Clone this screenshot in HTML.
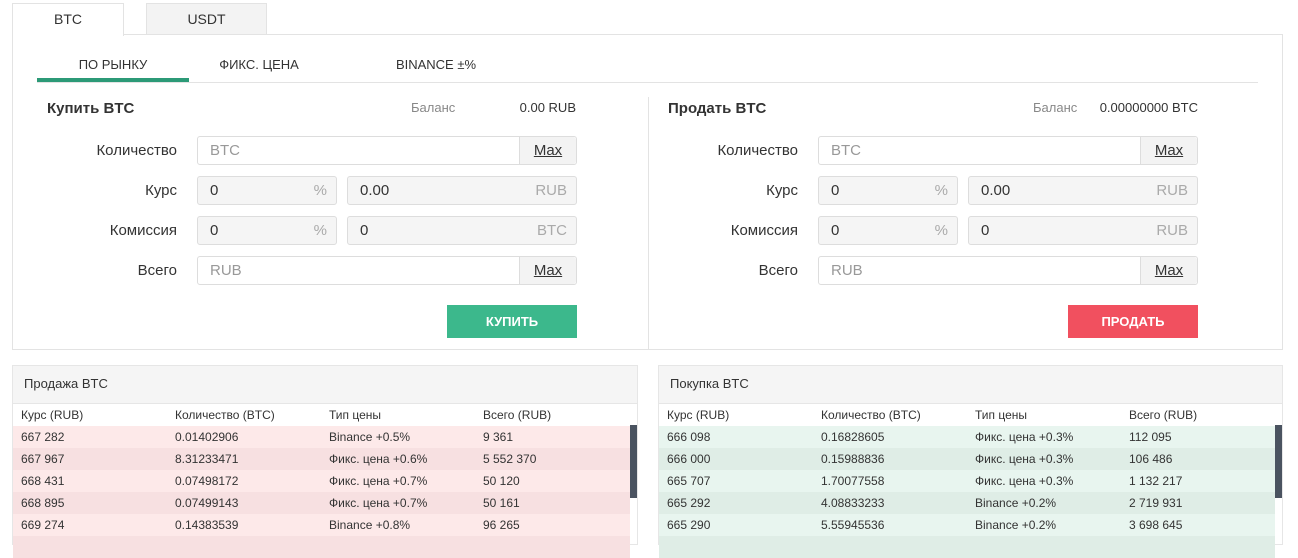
<!DOCTYPE html>
<html><head><meta charset="utf-8"><style>
*{box-sizing:border-box;margin:0;padding:0}
body{width:1298px;height:538px;overflow:hidden;background:#fff;font-family:"Liberation Sans",sans-serif;color:#333;position:relative}
.a{position:absolute}
.tab{position:absolute;top:3px;height:32px;border:1px solid #e3e3e3;border-bottom:none;font-size:14px;text-align:center;line-height:30px}
.lbl{position:absolute;font-size:15px;color:#333;text-align:right;width:150px}
.inp{position:absolute;height:29px;border:1px solid #ddd;border-radius:3px;font-size:15px;color:#999;line-height:27px;padding-left:12px}
.dis{background:#f5f5f5}
.max{position:absolute;right:0;top:0;height:27px;width:57px;border-left:1px solid #ddd;background:#f3f3f3;color:#333;text-decoration:underline;text-align:center;border-radius:0 3px 3px 0}
.suf{position:absolute;right:9px;top:0;color:#aaa}
.btn{position:absolute;width:130px;height:33px;color:#fff;font-size:13px;font-weight:bold;text-align:center;line-height:33px}
.panel{position:absolute;top:365px;height:180px;border:1px solid #e6e6e6}
.ph{height:38px;background:#f5f5f5;font-size:13px;line-height:36px;padding-left:11px;border-bottom:1px solid #e6e6e6}
.row{height:22px;font-size:12px;line-height:22px;position:relative}
.row span{position:absolute;top:0}
</style></head><body>
<div class="tab" style="left:12px;width:112px;background:#fff;z-index:2;height:33px">BTC</div>
<div class="tab" style="left:146px;width:121px;background:#f3f3f3">USDT</div>
<div class="a" style="left:12px;top:34px;width:1271px;height:316px;border:1px solid #e3e3e3"></div>
<div class="a" style="left:37px;top:82px;width:1221px;height:1px;background:#e3e3e3"></div>
<div class="a" style="left:37px;top:78px;width:152px;height:4px;background:#2c9a77"></div>
<div class="a" style="left:37px;top:57px;width:152px;text-align:center;font-size:13px">ПО РЫНКУ</div>
<div class="a" style="left:204px;top:57px;width:110px;text-align:center;font-size:13px">ФИКС. ЦЕНА</div>
<div class="a" style="left:381px;top:57px;width:110px;text-align:center;font-size:13px">BINANCE ±%</div>
<div class="a" style="left:648px;top:97px;width:1px;height:253px;background:#e3e3e3"></div>

<div class="a" style="left:47px;top:100px;font-size:15px;font-weight:bold">Купить BTC</div>
<div class="a" style="left:411px;top:100px;font-size:13px;color:#888">Баланс</div>
<div class="a" style="left:476px;top:100px;width:100px;text-align:right;font-size:13px">0.00 RUB</div>
<div class="lbl" style="left:27px;top:142px">Количество</div>
<div class="lbl" style="left:27px;top:182px">Курс</div>
<div class="lbl" style="left:27px;top:222px">Комиссия</div>
<div class="lbl" style="left:27px;top:262px">Всего</div>
<div class="inp" style="left:197px;top:136px;width:380px">BTC<div class="max">Max</div></div>
<div class="inp dis" style="left:197px;top:176px;width:140px;color:#333">0<span class="suf">%</span></div>
<div class="inp dis" style="left:347px;top:176px;width:230px;color:#333">0.00<span class="suf">RUB</span></div>
<div class="inp dis" style="left:197px;top:216px;width:140px;color:#333">0<span class="suf">%</span></div>
<div class="inp dis" style="left:347px;top:216px;width:230px;color:#333">0<span class="suf">BTC</span></div>
<div class="inp" style="left:197px;top:256px;width:380px">RUB<div class="max">Max</div></div>
<div class="btn" style="left:447px;top:305px;background:#3cb88c">КУПИТЬ</div>

<div class="a" style="left:668px;top:100px;font-size:15px;font-weight:bold">Продать BTC</div>
<div class="a" style="left:1033px;top:100px;font-size:13px;color:#888">Баланс</div>
<div class="a" style="left:1078px;top:100px;width:120px;text-align:right;font-size:13px">0.00000000 BTC</div>
<div class="lbl" style="left:648px;top:142px">Количество</div>
<div class="lbl" style="left:648px;top:182px">Курс</div>
<div class="lbl" style="left:648px;top:222px">Комиссия</div>
<div class="lbl" style="left:648px;top:262px">Всего</div>
<div class="inp" style="left:818px;top:136px;width:380px">BTC<div class="max">Max</div></div>
<div class="inp dis" style="left:818px;top:176px;width:140px;color:#333">0<span class="suf">%</span></div>
<div class="inp dis" style="left:968px;top:176px;width:230px;color:#333">0.00<span class="suf">RUB</span></div>
<div class="inp dis" style="left:818px;top:216px;width:140px;color:#333">0<span class="suf">%</span></div>
<div class="inp dis" style="left:968px;top:216px;width:230px;color:#333">0<span class="suf">RUB</span></div>
<div class="inp" style="left:818px;top:256px;width:380px">RUB<div class="max">Max</div></div>
<div class="btn" style="left:1068px;top:305px;background:#f1505f">ПРОДАТЬ</div>

<div class="panel" style="left:12px;width:626px">
<div class="ph">Продажа BTC</div>
<div class="row" style="background:#fff"><span style="left:8px">Курс (RUB)</span><span style="left:162px">Количество (BTC)</span><span style="left:316px">Тип цены</span><span style="left:470px">Всего (RUB)</span></div>
<div class="row" style="background:#fde9e9;width:617px"><span style="left:8px">667 282</span><span style="left:162px">0.01402906</span><span style="left:316px">Binance +0.5%</span><span style="left:470px">9 361</span></div>
<div class="row" style="background:#f7e0e1;width:617px"><span style="left:8px">667 967</span><span style="left:162px">8.31233471</span><span style="left:316px">Фикс. цена +0.6%</span><span style="left:470px">5 552 370</span></div>
<div class="row" style="background:#fde9e9;width:617px"><span style="left:8px">668 431</span><span style="left:162px">0.07498172</span><span style="left:316px">Фикс. цена +0.7%</span><span style="left:470px">50 120</span></div>
<div class="row" style="background:#f7e0e1;width:617px"><span style="left:8px">668 895</span><span style="left:162px">0.07499143</span><span style="left:316px">Фикс. цена +0.7%</span><span style="left:470px">50 161</span></div>
<div class="row" style="background:#fde9e9;width:617px"><span style="left:8px">669 274</span><span style="left:162px">0.14383539</span><span style="left:316px">Binance +0.8%</span><span style="left:470px">96 265</span></div>
<div class="row" style="background:#f7e0e1;width:617px"></div>
<div class="a" style="left:617px;top:59px;width:7px;height:73px;background:#4a5360"></div>
</div>

<div class="panel" style="left:658px;width:625px">
<div class="ph">Покупка BTC</div>
<div class="row" style="background:#fff"><span style="left:8px">Курс (RUB)</span><span style="left:162px">Количество (BTC)</span><span style="left:316px">Тип цены</span><span style="left:470px">Всего (RUB)</span></div>
<div class="row" style="background:#e8f5ef;width:616px"><span style="left:8px">666 098</span><span style="left:162px">0.16828605</span><span style="left:316px">Фикс. цена +0.3%</span><span style="left:470px">112 095</span></div>
<div class="row" style="background:#dfede6;width:616px"><span style="left:8px">666 000</span><span style="left:162px">0.15988836</span><span style="left:316px">Фикс. цена +0.3%</span><span style="left:470px">106 486</span></div>
<div class="row" style="background:#e8f5ef;width:616px"><span style="left:8px">665 707</span><span style="left:162px">1.70077558</span><span style="left:316px">Фикс. цена +0.3%</span><span style="left:470px">1 132 217</span></div>
<div class="row" style="background:#dfede6;width:616px"><span style="left:8px">665 292</span><span style="left:162px">4.08833233</span><span style="left:316px">Binance +0.2%</span><span style="left:470px">2 719 931</span></div>
<div class="row" style="background:#e8f5ef;width:616px"><span style="left:8px">665 290</span><span style="left:162px">5.55945536</span><span style="left:316px">Binance +0.2%</span><span style="left:470px">3 698 645</span></div>
<div class="row" style="background:#dfede6;width:616px"></div>
<div class="a" style="left:616px;top:59px;width:7px;height:73px;background:#4a5360"></div>
</div>
</body></html>
